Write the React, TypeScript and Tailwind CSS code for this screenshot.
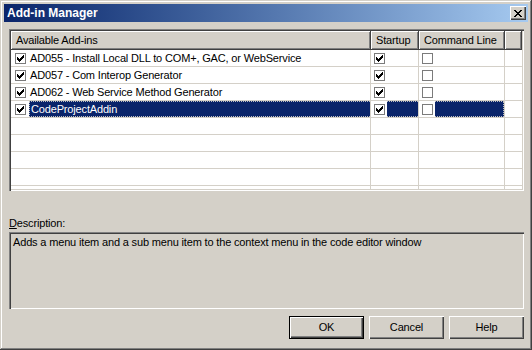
import React from 'react';

interface AddIn {
  name: string;
  loaded: boolean;
  startup: boolean;
  commandLine: boolean;
}

const addIns: AddIn[] = [
  { name: 'AD055 - Install Local DLL to COM+, GAC, or WebService', loaded: true, startup: true, commandLine: false },
  { name: 'AD057 - Com Interop Generator', loaded: true, startup: true, commandLine: false },
  { name: 'AD062 - Web Service Method Generator', loaded: true, startup: true, commandLine: false },
  { name: 'CodeProjectAddin', loaded: true, startup: true, commandLine: false },
];

const SELECTED = 3;

function Check({ checked }: { checked: boolean }) {
  return (
    <span className="flex h-[11px] w-[11px] shrink-0 items-center justify-center border border-[#7b7b7b] bg-white">
      {checked && (
        <svg width="9" height="9" viewBox="0 0 9 9" shapeRendering="crispEdges">
          <path d="M7 1h1v1H7zM6 2h2v1H6zM1 3h1v1H1zM5 3h3v1H5zM1 4h2v1H1zM4 4h3v1H4zM1 5h5v1H1zM2 6h3v1H2zM3 7h1v1H3z" fill="#000" />
        </svg>
      )}
    </span>
  );
}

function HeaderCell({ label, width, grow }: { label?: string; width?: string; grow?: boolean }) {
  return (
    <div
      className={`h-[19px] shrink-0 border-r border-b border-[#404040] bg-[#d4d0c8] pt-[2px] pl-[5px] leading-[15px] shadow-[inset_1px_1px_#ffffff,inset_-1px_-1px_#808080] ${width ?? ''} ${grow ? 'grow' : ''}`}
    >
      {label}
    </div>
  );
}

function Button({ label, primary }: { label: string; primary?: boolean }) {
  return (
    <div
      className={`flex h-[23px] w-[75px] items-center justify-center bg-[#d4d0c8] ${
        primary
          ? 'border border-black shadow-[inset_1px_1px_#ffffff,inset_-1px_-1px_#404040,inset_-2px_-2px_#808080]'
          : 'shadow-[inset_1px_1px_#ffffff,inset_-1px_-1px_#404040,inset_-2px_-2px_#808080]'
      }`}
    >
      {label}
    </div>
  );
}

export default function App() {
  const emptyRows = Array.from({ length: 5 });

  return (
    <div
      className="flex h-[350px] w-[532px] flex-col bg-[#d4d0c8] p-[4px] text-[11px] tracking-[-0.16px] text-black shadow-[inset_-1px_-1px_#404040,inset_1px_1px_#d4d0c8,inset_-2px_-2px_#808080,inset_2px_2px_#ffffff]"
      style={{ fontFamily: '"Liberation Sans", Arial, sans-serif' }}
    >
      {/* title bar */}
      <div className="flex h-[18px] items-center justify-between bg-gradient-to-r from-[#0a246a] to-[#a6caf0] pr-[2px] pl-[3px]">
        <span className="text-[12px] font-bold tracking-normal text-white">Add-in Manager</span>
        <div className="flex h-[14px] w-[16px] items-center justify-center bg-[#d4d0c8] shadow-[inset_1px_1px_#ffffff,inset_-1px_-1px_#404040,inset_-2px_-2px_#808080]">
          <svg width="8" height="7" viewBox="0 0 8 7" shapeRendering="crispEdges">
            <path d="M0 0h2v1H0zM6 0h2v1H6zM1 1h2v1H1zM5 1h2v1H5zM2 2h4v1H2zM3 3h2v1H3zM2 4h4v1H2zM1 5h2v1H1zM5 5h2v1H5zM0 6h2v1H0zM6 6h2v1H6z" fill="#000" />
          </svg>
        </div>
      </div>

      <div className="flex grow flex-col pr-[4px] pl-[5px]">
        {/* list view */}
        <div className="mt-[7px] h-[162px] bg-white p-[2px] shadow-[inset_1px_1px_#808080,inset_2px_2px_#404040,inset_-1px_-1px_#ffffff,inset_-2px_-2px_#d4d0c8]">
          <div className="h-full overflow-hidden">
            <div className="flex">
              <HeaderCell label="Available Add-ins" width="w-[360px]" />
              <HeaderCell label="Startup" width="w-[48px]" />
              <HeaderCell label="Command Line" width="w-[86px]" />
              <HeaderCell grow />
            </div>

            {addIns.map((a, i) => {
              const sel = i === SELECTED;
              return (
                <div key={a.name} className="flex h-[17px] border-b border-[#d4d0c8]">
                  <div className="flex w-[360px] shrink-0 items-center border-r border-[#d4d0c8]">
                    <div className="flex w-[18px] shrink-0 justify-center">
                      <Check checked={a.loaded} />
                    </div>
                    <div
                      className={`flex h-full grow items-center pt-[1px] pl-[1px] ${
                        sel ? 'border-y border-l border-dotted border-[#c0c0c0] bg-[#0a246a] text-white' : ''
                      }`}
                    >
                      {a.name}
                    </div>
                  </div>
                  <div className="flex w-[48px] shrink-0 items-center border-r border-[#d4d0c8]">
                    <div className="flex w-[16px] shrink-0 justify-center">
                      <Check checked={a.startup} />
                    </div>
                    <div className={`h-full grow ${sel ? 'border-y border-dotted border-[#c0c0c0] bg-[#0a246a]' : ''}`} />
                  </div>
                  <div className="flex w-[86px] shrink-0 items-center border-r border-[#d4d0c8]">
                    <div className="flex w-[16px] shrink-0 justify-center">
                      <Check checked={a.commandLine} />
                    </div>
                    <div
                      className={`h-full grow ${sel ? 'border-y border-r border-dotted border-[#c0c0c0] bg-[#0a246a]' : ''}`}
                    />
                  </div>
                  <div className="grow" />
                </div>
              );
            })}

            {emptyRows.map((_, i) => (
              <div key={i} className="flex h-[17px] border-b border-[#d4d0c8]">
                <div className="w-[360px] shrink-0 border-r border-[#d4d0c8]" />
                <div className="w-[48px] shrink-0 border-r border-[#d4d0c8]" />
                <div className="w-[86px] shrink-0 border-r border-[#d4d0c8]" />
                <div className="grow" />
              </div>
            ))}
          </div>
        </div>

        {/* description */}
        <div className="mt-[26px] h-[13px] leading-[13px]">
          <span className="underline">D</span>escription:
        </div>
        <div className="mt-[2px] h-[77px] px-[4px] py-[2px] shadow-[inset_1px_1px_#808080,inset_2px_2px_#404040,inset_-1px_-1px_#ffffff,inset_-2px_-2px_#d4d0c8]">
          Adds a menu item and a sub menu item to the context menu in the code editor window
        </div>

        {/* buttons */}
        <div className="mt-[7px] flex justify-end gap-[5px]">
          <Button label="OK" primary />
          <Button label="Cancel" />
          <Button label="Help" />
        </div>
      </div>
    </div>
  );
}
